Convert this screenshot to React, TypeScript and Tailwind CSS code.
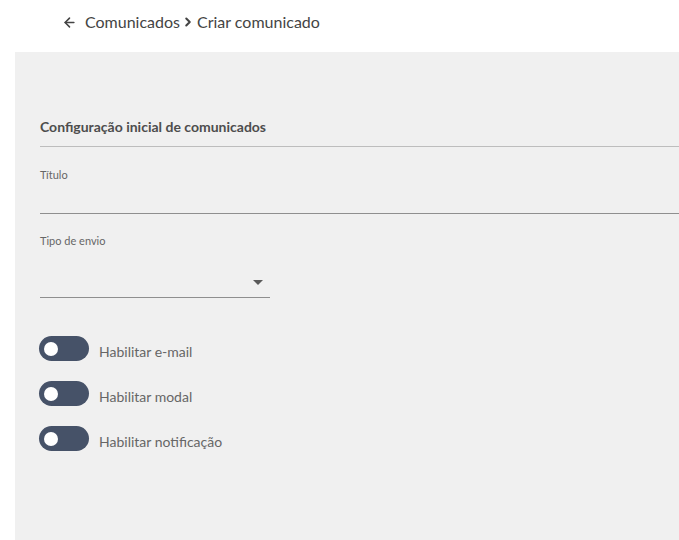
import React, { useState } from 'react';
import { ArrowLeft, ChevronRight } from 'lucide-react';

function Toggle({ label }: { label: string }) {
  const [on, setOn] = useState(false);
  return (
    <div className="flex items-center">
      <button
        type="button"
        onClick={() => setOn(!on)}
        className="relative h-[25px] w-[50px] rounded-full bg-[#465268]"
      >
        <span
          className={`absolute top-[5.5px] h-[14px] w-[14px] rounded-full bg-white ${
            on ? 'left-[31px]' : 'left-[5px]'
          }`}
        />
      </button>
      <span className="ml-[10px] mt-[6px] text-[14px] leading-[18px] text-[#666666]">{label}</span>
    </div>
  );
}

export default function App() {
  return (
    <div className="h-[540px] bg-white font-['Lato','Liberation_Sans',sans-serif]">
      <div className="flex h-[52px] items-start pl-[62px] pt-[12px]">
        <div className="flex h-[20px] items-center text-[16px] leading-[20px] text-[#444444]">
          <ArrowLeft className="h-[15px] w-[15px]" strokeWidth={2.5} />
          <span className="ml-[8px]">Comunicados</span>
          <ChevronRight className="mx-[1px] h-[14px] w-[14px]" strokeWidth={3.5} />
          <span className="ml-[1px]">Criar comunicado</span>
        </div>
      </div>

      <div className="ml-[15px] h-[488px] bg-[#f0f0f0] pl-[25px] pt-[66px]">
        <div className="border-b border-[#bdbdbd] pb-[10px]">
          <h2 className="text-[14px] font-bold leading-[18px] text-[#4d4d4d]">
            Configuração inicial de comunicados
          </h2>
        </div>

        <div className="mt-[21px]">
          <label className="block text-[11px] leading-[14px] text-[#666666]">Título</label>
          <input className="block h-[32px] w-full border-b border-[#8f8f8f] bg-transparent outline-none" />
        </div>

        <div className="mt-[20px]">
          <label className="block text-[11px] leading-[14px] text-[#666666]">Tipo de envio</label>
          <div className="relative h-[50px] w-[230px] border-b border-[#8f8f8f]">
            <svg className="absolute right-[7px] top-[32px]" width="10" height="5" viewBox="0 0 10 5">
              <path d="M0 0 L10 0 L5 5 Z" fill="#5a5a5a" />
            </svg>
          </div>
        </div>

        <div className="mt-[38px] flex flex-col gap-[20px]">
          <div className="-ml-px">
            <Toggle label="Habilitar e-mail" />
          </div>
          <div className="-ml-px">
            <Toggle label="Habilitar modal" />
          </div>
          <div className="-ml-px">
            <Toggle label="Habilitar notificação" />
          </div>
        </div>
      </div>
    </div>
  );
}
